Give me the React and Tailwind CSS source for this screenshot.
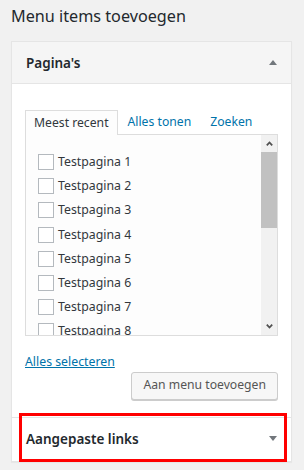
export default function App() {
  const items = [1, 2, 3, 4, 5, 6, 7, 8];
  return (
    <div
      className="relative w-[304px] h-[470px] overflow-hidden bg-[#f1f1f1] text-[#32373c]"
      style={{ fontFamily: '"Noto Sans", "Open Sans", sans-serif' }}
    >
      <h2 className="pl-[11px] pt-[5px] text-[16.2px] leading-[23px] font-normal text-[#23282d]">
        Menu items toevoegen
      </h2>
      <div className="mt-[13px] ml-[11px] w-[281px] border border-[#e5e5e5] bg-white shadow-[0_1px_1px_rgba(0,0,0,0.04)]">
        <div className="h-[42px] bg-[#f5f5f5] border-b border-[#e5e5e5] flex items-center justify-between pl-[14px] pr-[14px]">
          <span className="text-[13.5px] leading-[20px] font-semibold text-[#23282d]">Pagina's</span>
          <svg width="8" height="5" viewBox="0 0 8 5" className="block">
            <path d="M0 5 L4 0 L8 5 Z" fill="#72777c" />
          </svg>
        </div>
        <div className="px-[13px] pt-[26px] pb-[17px]">
          <div className="flex items-end h-[24px] text-[12.2px] leading-[18px]">
            <div className="relative z-10 h-[25px] -mb-[1px] border-l border-t border-r border-[#dddddd] bg-[#fdfdfd] px-[8px] pt-[3px] text-[#32373c]">
              Meest recent
            </div>
            <div className="h-[24px] pt-[3px] pl-[10px] text-[#0073aa]">Alles tonen</div>
            <div className="h-[24px] pt-[3px] pl-[19px] text-[#0073aa]">Zoeken</div>
          </div>
          <div className="h-[202px] border border-[#dddddd] bg-[#fdfdfd] flex">
            <div className="flex-1 overflow-hidden pt-[19px] pl-[12px]">
              {items.map((n) => (
                <div key={n} className="h-[24.2px] flex items-start">
                  <span className="block w-[16px] h-[16px] border border-[#b4b9be] bg-white shrink-0" />
                  <span className="ml-[4px] -mt-[1px] text-[12.3px] leading-[18px] text-[#32373c] whitespace-nowrap">
                    Testpagina {n}
                  </span>
                </div>
              ))}
            </div>
            <div className="w-[16px] bg-[#f1f1f1] flex flex-col">
              <div className="h-[17px] flex items-center justify-center">
                <svg width="7" height="5" viewBox="0 0 7 5" className="block">
                  <path d="M0.8 4.3 L3.5 1.5 L6.2 4.3" stroke="#505050" strokeWidth="1.8" fill="none" />
                </svg>
              </div>
              <div className="h-[76px] bg-[#c1c1c1]" />
              <div className="flex-1" />
              <div className="h-[17px] flex items-center justify-center">
                <svg width="7" height="5" viewBox="0 0 7 5" className="block">
                  <path d="M0.8 0.7 L3.5 3.5 L6.2 0.7" stroke="#505050" strokeWidth="1.8" fill="none" />
                </svg>
              </div>
            </div>
          </div>
          <div className="mt-[17px] text-[12.3px] leading-[18px]">
            <a className="text-[#0073aa] underline">Alles selecteren</a>
          </div>
          <div className="mt-[1px] flex justify-end">
            <div className="h-[28px] px-[11px] pt-[3px] border border-[#cccccc] rounded-[3px] bg-[#f7f7f7] shadow-[0_1px_0_#cccccc] text-[12.2px] leading-[18px] text-[#555555]">
              Aan menu toevoegen
            </div>
          </div>
        </div>
        <div className="h-[44px] border-t border-[#e5e5e5] bg-white flex items-center justify-between pl-[14px] pr-[14px] pb-[2px]">
          <span className="text-[13.5px] leading-[20px] font-semibold text-[#23282d]">Aangepaste links</span>
          <svg width="8" height="5" viewBox="0 0 8 5" className="block">
            <path d="M0 0 L8 0 L4 5 Z" fill="#72777c" />
          </svg>
        </div>
      </div>
      <div className="absolute left-[19px] top-[413px] w-[268px] h-[49px] border-[3px] border-[#ff0000]" />
    </div>
  );
}
